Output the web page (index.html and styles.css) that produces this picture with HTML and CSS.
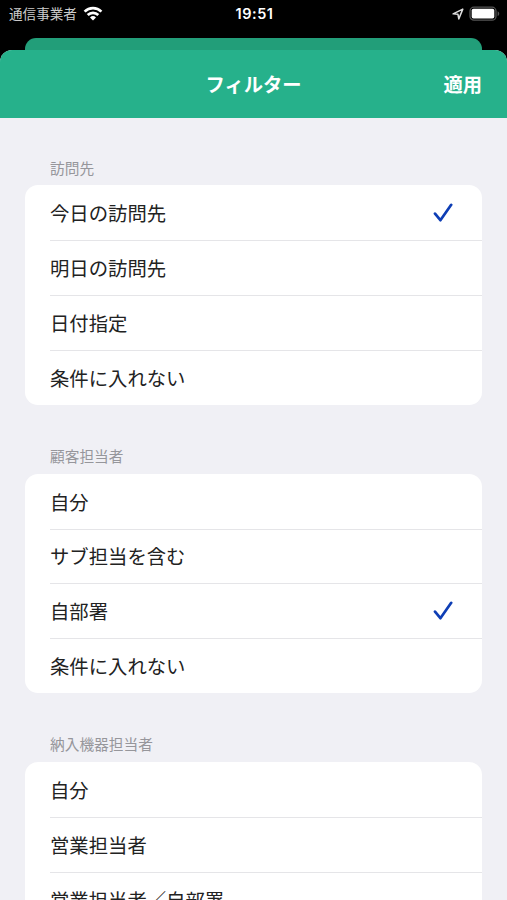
FILE: index.html
```html
<!DOCTYPE html>
<html lang="ja">
<head>
  <meta charset="UTF-8">
  <meta name="viewport" content="width=device-width, initial-scale=1.0">
  <title>フィルター</title>
  <link rel="stylesheet" href="styles.css">
</head>
<body>
  <div class="status-bar">
    <div class="status-left">
      <span class="carrier">通信事業者</span>
      <svg class="wifi" width="20" height="15" viewBox="0 0 20 15" fill="none" stroke="#fff" stroke-width="2.7">
        <path d="M1.6 5.6a12 12 0 0 1 16.8 0"/>
        <path d="M4.7 9a7.6 7.6 0 0 1 10.6 0"/>
        <path d="M10 14.4L7 11.4a4.3 4.3 0 0 1 6 0z" fill="#fff" stroke="none"/>
      </svg>
    </div>
    <span class="clock">19:51</span>
    <div class="status-right">
      <svg width="12" height="12" viewBox="0 0 12 12" fill="none" stroke="#ddd" stroke-width="1.5" stroke-linejoin="round">
        <path d="M10.8 1.1L1.1 5.8l4.8.4.9 4.7z"/>
      </svg>
      <svg width="31" height="16" viewBox="0 0 31 16">
        <rect x="1" y="1.2" width="26" height="13" rx="4" fill="none" stroke="#555" stroke-width="1.3"/>
        <rect x="2.7" y="2.8" width="22.6" height="9.8" rx="1.8" fill="#fff"/>
        <path d="M28.6 5.3v4.8c2.2-.8 2.2-4 0-4.8z" fill="#555"/>
      </svg>
    </div>
  </div>

  <div class="back-sheet"></div>

  <div class="sheet">
    <div class="header">
      <span class="title">フィルター</span>
      <button class="apply-btn">適用</button>
    </div>

    <div class="content">
      <h2>訪問先</h2>
      <ul>
        <li>今日の訪問先
          <svg class="check" width="20" height="20" viewBox="0 0 20 20"><path d="M2 10.6l5.4 6.6L18.2 1.8"/></svg>
        </li>
        <li>明日の訪問先</li>
        <li>日付指定</li>
        <li>条件に入れない</li>
      </ul>

      <h2>顧客担当者</h2>
      <ul>
        <li>自分</li>
        <li>サブ担当を含む</li>
        <li>自部署
          <svg class="check" width="20" height="20" viewBox="0 0 20 20"><path d="M2 10.6l5.4 6.6L18.2 1.8"/></svg>
        </li>
        <li>条件に入れない</li>
      </ul>

      <h2>納入機器担当者</h2>
      <ul>
        <li>自分</li>
        <li>営業担当者</li>
        <li>営業担当者／自部署</li>
      </ul>
    </div>
  </div>
</body>
</html>
```

FILE: styles.css
```css
* {
  box-sizing: border-box;
}

body {
  margin: 0;
  height: 900px;
  overflow: hidden;
  display: flex;
  flex-direction: column;
  background-color: #000;
  font-family: Inter, "Noto Sans CJK JP", sans-serif;
}

.status-bar {
  flex: none;
  height: 38px;
  padding: 0 7px 11px 9px;
  display: grid;
  grid-template-columns: 1fr auto 1fr;
  align-items: center;
  color: #fff;
}

.status-left,
.status-right {
  display: flex;
  align-items: center;
}

.status-left {
  gap: 6px;
}

.status-right {
  justify-content: flex-end;
  gap: 5px;
}

.carrier {
  font-size: 13.6px;
  line-height: 20px;
  color: #ccc;
}

.clock {
  font-size: 14.5px;
  font-weight: 600;
  letter-spacing: 0.5px;
}

.back-sheet {
  flex: none;
  height: 12px;
  margin: 0 25px;
  background-color: #229e79;
  border-radius: 11px 11px 0 0;
}

.sheet {
  flex: 1;
  min-height: 0;
  overflow: hidden;
  background-color: #f0f0f5;
  border-radius: 12px 12px 0 0;
}

.header {
  height: 68px;
  padding: 0 25px;
  display: grid;
  grid-template-columns: 1fr auto 1fr;
  align-items: center;
  background-color: #26b18b;
  color: #fff;
  font-size: 19.3px;
  font-weight: 600;
}

.title {
  grid-column: 2;
}

.apply-btn {
  justify-self: end;
  padding: 0;
  border: none;
  background: none;
  color: inherit;
  font: inherit;
}

.content {
  padding: 36.2px 25px 0;
}

h2 {
  margin: 0;
  padding: 0.5px 25px 0;
  height: 31.3px;
  font-size: 14.7px;
  font-weight: 400;
  line-height: 28px;
  color: #96969b;
}

ul {
  margin: 0 0 37.3px;
  padding: 0 0 0 25px;
  list-style: none;
  background-color: #fff;
  border-radius: 13px;
}

li {
  height: 54.9px;
  padding-right: 29px;
  display: flex;
  align-items: center;
  justify-content: space-between;
  border-top: 1px solid transparent;
  font-size: 19.35px;
  color: #222;
}

li + li {
  border-top-color: #e5e5e8;
}

.check {
  fill: none;
  stroke: #0e3eb5;
  stroke-width: 2.7;
  stroke-linecap: round;
  stroke-linejoin: round;
}
```
